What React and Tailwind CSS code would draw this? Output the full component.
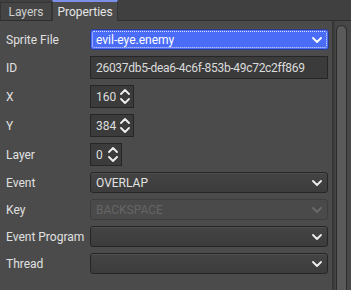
import React from 'react';

const FONT = { fontFamily: 'Roboto, "Noto Sans", sans-serif' };

function Chevron({ down = true, className = '' }) {
  return (
    <svg className={className} width="10" height="6" viewBox="0 0 10 6" fill="none">
      <polyline
        points={down ? '1,1 5,5 9,1' : '1,5 5,1 9,5'}
        stroke="currentColor"
        strokeWidth="1.8"
        strokeLinecap="round"
        strokeLinejoin="round"
      />
    </svg>
  );
}

function Combo({ value, focused, disabled }) {
  if (focused) {
    return (
      <div className="w-[239px] h-[21px] rounded-[3px] bg-[#4b6cf6] border border-[#2c3a8a] p-[1px]">
        <div className="h-full flex items-center justify-between pl-[3px] pr-[4px] border border-dotted border-white/80 rounded-[2px]">
          <span className="text-white text-[12px] leading-none">{value}</span>
          <Chevron className="text-white" />
        </div>
      </div>
    );
  }
  return (
    <div
      className={`w-[238px] h-[21px] rounded-[3px] border flex items-center justify-between pl-[5px] pr-[5px] ${
        disabled ? 'bg-[#4a4a4a] border-[#3d3d3d]' : 'bg-gradient-to-b from-[#444] to-[#3c3c3c] border-[#262626] shadow-[inset_0_1px_0_#4f4f4f]'
      }`}
    >
      <span className={`text-[12px] leading-none ${disabled ? 'text-[#656565]' : 'text-[#e2e2e2]'}`}>{value}</span>
      <Chevron className={disabled ? 'text-[#6a6a6a]' : 'text-[#eeeeee]'} />
    </div>
  );
}

function Spin({ value, width }) {
  return (
    <div
      className="h-[23px] bg-[#3b3b3b] border border-[#262626] flex items-center justify-between pl-[5px] pr-[3px]"
      style={{ width }}
    >
      <span className="text-[12px] leading-none text-[#dedede]">{value}</span>
      <div className="flex flex-col gap-[3px] text-[#f0f0f0]">
        <Chevron down={false} />
        <Chevron />
      </div>
    </div>
  );
}

function Row({ label, children, h }) {
  return (
    <div className="flex items-center" style={{ height: h }}>
      <span className="w-[90px] pl-[6px] text-[12px] text-[#e0e0e0] leading-none whitespace-nowrap">{label}</span>
      {children}
    </div>
  );
}

export default function App() {
  return (
    <div className="w-[351px] h-[290px] bg-[#4b4b4b] flex flex-col overflow-hidden" style={FONT}>
      {/* Tab bar */}
      <div className="h-[21px] bg-[#404040] flex items-end border-b border-[#2e2e2e]">
        <div className="h-[18px] w-[52px] bg-[#454545] border border-b-0 border-[#353535] flex items-center justify-center text-[12px] text-[#cfcfcf]">
          Layers
        </div>
        <div className="h-[21px] w-[66px] bg-[#4b4b4b] border-x border-[#353535] border-t-2 border-t-[#7b8fe8] flex items-center justify-center text-[12px] text-[#e6e6e6] -mb-px">
          Properties
        </div>
      </div>

      <div className="flex flex-1">
        {/* Form */}
        <div className="flex-1 flex flex-col gap-[6px] pt-[8px]">
          <Row label="Sprite File" h={21}>
            <Combo value="evil-eye.enemy" focused />
          </Row>
          <Row label="ID" h={23}>
            <div className="w-[238px] h-[23px] bg-[#3b3b3b] border border-[#262626] flex items-center pl-[5px] text-[12px] tracking-[-0.3px] text-[#dcdcdc] whitespace-nowrap">
              26037db5-dea6-4c6f-853b-49c72c2ff869
            </div>
          </Row>
          <Row label="X" h={23}>
            <Spin value="160" width={44} />
          </Row>
          <Row label="Y" h={23}>
            <Spin value="384" width={44} />
          </Row>
          <Row label="Layer" h={23}>
            <Spin value="0" width={32} />
          </Row>
          <Row label="Event" h={21}>
            <Combo value="OVERLAP" />
          </Row>
          <Row label="Key" h={21}>
            <Combo value="BACKSPACE" disabled />
          </Row>
          <Row label="Event Program" h={21}>
            <Combo value="" />
          </Row>
          <Row label="Thread" h={21}>
            <Combo value="" />
          </Row>
        </div>

        {/* Scrollbar */}
        <div className="w-[19px] flex border-l border-[#333] bg-[#474747]">
          <div className="w-[2px] bg-[#3c3c3c]" />
          <div className="flex-1 pt-[4px] pl-[1px] pr-[4px]">
            <div className="h-full rounded-t-[6px] bg-[#5a5a5a] border border-[#2c2c2c] border-b-0" />
          </div>
        </div>
      </div>
    </div>
  );
}
